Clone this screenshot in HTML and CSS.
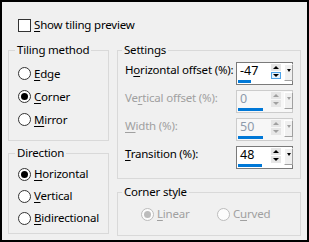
FILE: index.html
```html
<!DOCTYPE html>
<html lang="en">
<head>
  <meta charset="UTF-8">
  <title>Seamless Tiling</title>
  <link rel="stylesheet" href="styles.css">
</head>
<body>
  <div class="dialog">
    <label class="check-row">
      <span class="checkbox"></span>
      <span><u>S</u>how tiling preview</span>
    </label>

    <div class="columns">
      <div class="col">
        <fieldset class="group tiling">
          <legend>Tiling method</legend>
          <div class="opt"><span class="radio"></span><span><u>E</u>dge</span></div>
          <div class="opt"><span class="radio on"></span><span><u>C</u>orner</span></div>
          <div class="opt"><span class="radio"></span><span><u>M</u>irror</span></div>
        </fieldset>

        <fieldset class="group direction">
          <legend>Direction</legend>
          <div class="opt"><span class="radio on"></span><span><u>H</u>orizontal</span></div>
          <div class="opt"><span class="radio"></span><span><u>V</u>ertical</span></div>
          <div class="opt"><span class="radio"></span><span><u>B</u>idirectional</span></div>
        </fieldset>
      </div>

      <div class="col">
        <fieldset class="group settings">
          <legend>Settings</legend>
          <div class="field">
            <span class="field-label">H<u>o</u>rizontal offset (%):</span>
            <div class="spin">
              <span class="spin-value">-47</span>
              <span class="updown"><span class="ud up"></span><span class="ud down hot"></span></span>
              <span class="drop"></span>
              <span class="track"><span class="bar" style="width: 13px"></span></span>
            </div>
          </div>
          <div class="field disabled">
            <span class="field-label">Ve<u>r</u>tical offset (%):</span>
            <div class="spin">
              <span class="spin-value">0</span>
              <span class="updown"><span class="ud up"></span><span class="ud down"></span></span>
              <span class="drop"></span>
              <span class="track"><span class="bar" style="width: 25px"></span></span>
            </div>
          </div>
          <div class="field disabled">
            <span class="field-label"><u>W</u>idth (%):</span>
            <div class="spin">
              <span class="spin-value">50</span>
              <span class="updown"><span class="ud up"></span><span class="ud down"></span></span>
              <span class="drop"></span>
              <span class="track"><span class="bar" style="width: 25px"></span></span>
            </div>
          </div>
          <div class="field">
            <span class="field-label"><u>T</u>ransition (%):</span>
            <div class="spin">
              <span class="spin-value">48</span>
              <span class="updown"><span class="ud up"></span><span class="ud down"></span></span>
              <span class="drop"></span>
              <span class="track"><span class="bar" style="width: 24px"></span></span>
            </div>
          </div>
        </fieldset>

        <fieldset class="group corner">
          <legend>Corner style</legend>
          <div class="corner-row">
            <div class="opt disabled"><span class="radio on"></span><span><u>L</u>inear</span></div>
            <div class="opt disabled"><span class="radio"></span><span>C<u>u</u>rved</span></div>
          </div>
        </fieldset>
      </div>
    </div>
  </div>
</body>
</html>
```

FILE: styles.css
```css
body {
  margin: 0;
  font-family: 'Segoe UI', 'Noto Sans', sans-serif;
  font-size: 11.5px;
  letter-spacing: -0.2px;
  line-height: 16px;
  color: #000;
}

u {
  text-decoration-thickness: 1px;
  text-underline-offset: 2px;
}

.dialog {
  width: 309px;
  height: 242px;
  box-sizing: border-box;
  border: 2px solid #000;
  background: #f0f0f0;
  padding: 15px 6px 0 6px;
}

.check-row {
  display: flex;
  align-items: center;
  gap: 3px;
  margin-left: 10px;
  height: 16px;
}

.checkbox {
  width: 13px;
  height: 13px;
  box-sizing: border-box;
  border: 1px solid #333;
  background: #fff;
}

.columns {
  display: grid;
  grid-template-columns: 101px 184px;
  column-gap: 8px;
  margin-top: 10px;
}

.group {
  margin: 0;
  min-width: 0;
  border: 1px solid #d9d9d9;
  padding: 0;
}

.group legend {
  padding: 0 2px;
  line-height: 14px;
}

/* left column */
.tiling {
  padding: 5px 0 9px 9px;
}

.direction {
  margin-top: 5px;
  padding: 3px 0 4px 9px;
}

.tiling legend,
.direction legend {
  margin-left: -3px;
}

.opt {
  display: flex;
  align-items: center;
  gap: 3px;
  height: 23px;
}

.direction .opt {
  height: 22px;
}

.radio {
  width: 13px;
  height: 13px;
  box-sizing: border-box;
  border: 1px solid #333;
  border-radius: 50%;
  background: #fff;
  display: flex;
  align-items: center;
  justify-content: center;
  flex: none;
}

.radio.on::after {
  content: '';
  width: 7px;
  height: 7px;
  border-radius: 50%;
  background: #000;
}

.opt.disabled {
  color: #a0a0a0;
}

.opt.disabled .radio {
  border-color: #bcbcbc;
  background: #fcfcfc;
}

.opt.disabled .radio.on::after {
  background: #bcbcbc;
}

/* right column */
.settings {
  padding: 5px 7px 9px 7px;
  display: flex;
  flex-direction: column;
  gap: 5px;
}

.settings legend,
.corner legend {
  margin-left: -3px;
}

.field {
  display: flex;
  align-items: flex-start;
  height: 23px;
}

.field-label {
  flex: 1;
  white-space: nowrap;
  line-height: 14px;
  padding-top: 1px;
}

.field.disabled {
  color: #a0a0a0;
}

.spin {
  width: 57px;
  height: 23px;
  box-sizing: border-box;
  border: 1px solid #7a7a7a;
  background: #fff;
  padding: 0 2px 1px 1px;
  display: grid;
  grid-template-columns: 30px 10px 9px;
  grid-template-rows: 16px 3px;
  column-gap: 3px;
  row-gap: 1px;
}

.field.disabled .spin {
  border-color: #cccccc;
  background: #f7f7f7;
}

.spin-value {
  padding-left: 2px;
  font-size: 12.5px;
  line-height: 16px;
  letter-spacing: 0;
  color: #000;
}

.field.disabled .spin-value {
  color: #8d9aab;
}

.updown {
  display: flex;
  flex-direction: column;
  gap: 1px;
  padding-top: 1px;
}

.ud {
  height: 7px;
  box-sizing: border-box;
  background: #e6e6e6;
  display: flex;
  align-items: center;
  justify-content: center;
}

.ud.up::before {
  content: '';
  border-left: 3px solid transparent;
  border-right: 3px solid transparent;
  border-bottom: 3px solid #000;
}

.ud.down::before {
  content: '';
  border-left: 3px solid transparent;
  border-right: 3px solid transparent;
  border-top: 3px solid #000;
}

.ud.hot {
  background: #e5f1fb;
  border: 1px solid #4fa3e8;
}

.field.disabled .ud.up::before {
  border-bottom-color: #a0a0a0;
}

.field.disabled .ud.down::before {
  border-top-color: #a0a0a0;
}

.drop {
  grid-column: 3;
  grid-row: 1 / 3;
  margin-top: 1px;
  height: 17px;
  box-sizing: border-box;
  background: #f0f0f0;
  border: 1px solid #fff;
  border-right-color: #a0a0a0;
  border-bottom-color: #a0a0a0;
  display: flex;
  justify-content: center;
  padding-top: 4px;
}

.drop::before {
  content: '';
  height: 0;
  border-left: 2.5px solid transparent;
  border-right: 2.5px solid transparent;
  border-top: 3px solid #000;
}

.field.disabled .drop::before {
  border-top-color: #a0a0a0;
}

.track {
  grid-column: 1 / 3;
  grid-row: 2;
}

.bar {
  display: block;
  height: 3px;
  background: #0078d7;
}

.corner {
  margin-top: 6px;
  padding: 4px 7px 10px 7px;
}

.corner-row {
  display: flex;
  margin-left: 16px;
}

.corner-row .opt {
  width: 81px;
  height: 22px;
}
```
